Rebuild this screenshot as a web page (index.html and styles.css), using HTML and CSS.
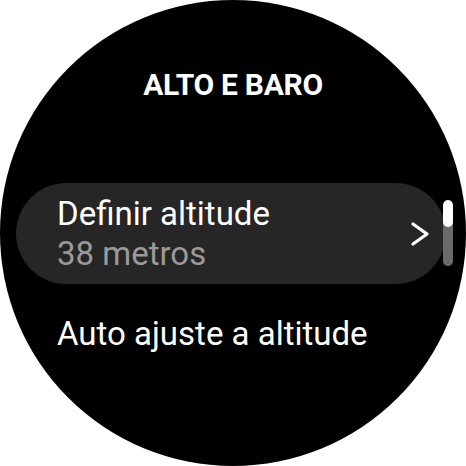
FILE: index.html
```html
<!DOCTYPE html>
<html lang="pt">
<head>
  <meta charset="UTF-8" />
  <title>Alto e baro</title>
  <link rel="stylesheet" href="styles.css">
</head>
<body>
  <div class="watch">
    <h1 class="title">ALTO E BARO</h1>

    <div class="item card">
      <div class="item-text">
        <div class="item-label">Definir altitude</div>
        <div class="item-value">38 metros</div>
      </div>
      <svg class="chevron" width="20" height="26" viewBox="0 0 20 26">
        <path d="M3 3 L17 13 L3 23" fill="none" stroke="#fff" stroke-width="3.2" stroke-linecap="round" stroke-linejoin="round"/>
      </svg>
    </div>

    <div class="item">
      <div class="item-label">Auto ajuste a altitude</div>
    </div>

    <div class="scrollbar"><div class="thumb"></div></div>
  </div>
</body>
</html>
```

FILE: styles.css
```css
* { box-sizing: border-box; }

body {
  margin: 0;
  background: #fff;
  font-family: Roboto, 'Noto Sans', sans-serif;
  color: #fff;
}

.watch {
  position: relative;
  width: 466px;
  height: 466px;
  border-radius: 50%;
  background: #000;
  overflow: hidden;
  display: flex;
  flex-direction: column;
  padding: 67px 20px 0 16px;
}

.title {
  margin: 0 0 80px;
  text-align: center;
  font-size: 30px;
  font-weight: 700;
  line-height: 36px;
  letter-spacing: -0.3px;
  padding-left: 4px;
}

.item {
  display: flex;
  align-items: center;
  justify-content: space-between;
  padding: 0 0 0 41px;
}

.card {
  height: 101px;
  background: #262626;
  border-radius: 51px;
  padding-right: 16px;
  margin-bottom: 30px;
}

.item-label {
  font-size: 33px;
  line-height: 40px;
}

.item-value {
  font-size: 33px;
  line-height: 40px;
  color: #9a9a9a;
}

.chevron {
  display: block;
}

.scrollbar {
  position: absolute;
  left: 443px;
  top: 200px;
  width: 10px;
  height: 66px;
  border-radius: 5px;
  background: #6a6a6a;
  overflow: hidden;
}

.thumb {
  height: 27px;
  border-radius: 5px;
  background: #fff;
}
```
